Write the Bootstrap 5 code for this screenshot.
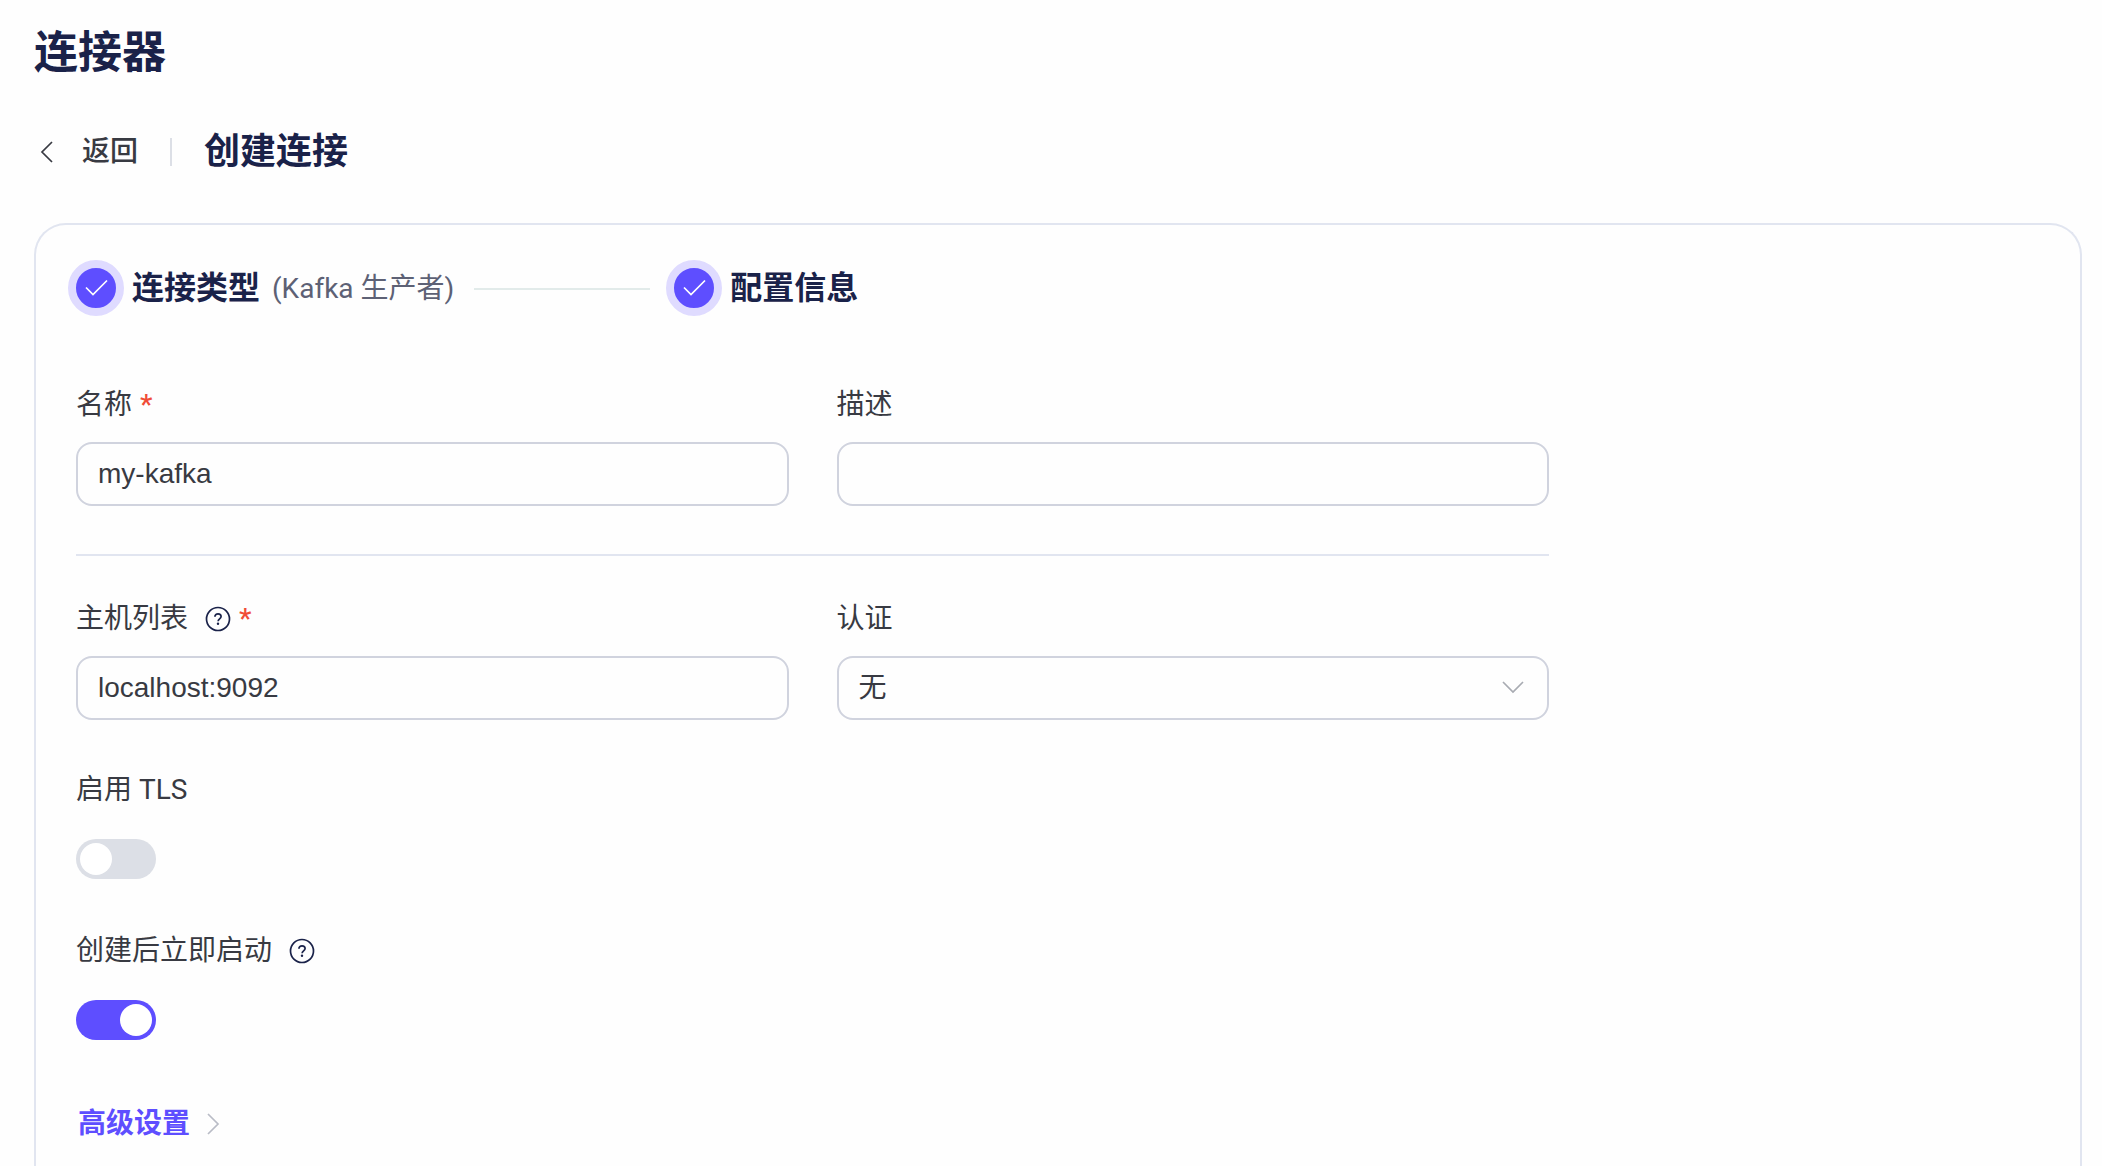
<!DOCTYPE html>
<html lang="zh-CN">
<head>
<meta charset="utf-8">
<meta name="viewport" content="width=device-width, initial-scale=1">
<title>连接器</title>
<link href="https://cdn.jsdelivr.net/npm/bootstrap@5.3.0/dist/css/bootstrap.min.css" rel="stylesheet">
<style>
  :root { --ink: #1a2249; --text: #383a42; --brand: #5e4eff; --line: #e1e5f0; --field: #d0d3de; }
  body { font-family: Roboto, "Noto Sans CJK SC", sans-serif; font-size: 28px; line-height: 44px; color: var(--text); background: #fefefe; }
  .page { padding: 21px 20px 0 34px; }
  .page-title { font-size: 44px; line-height: 64px; font-weight: 700; color: var(--ink); margin: 0 0 40px; }
  .back-link { color: var(--text); font-weight: 500; gap: 24px; padding-left: 2px; }
  .bar { width: 2px; height: 28px; background: #dcdfe6; margin: 0 32px; }
  .sub-title { font-size: 36px; line-height: 54px; font-weight: 700; color: var(--ink); margin: 0; }
  .panel { margin-top: 44px; border: 2px solid var(--line); border-bottom: 0; border-radius: 32px 32px 0 0; padding: 35px 40px 0; }
  .steps { margin: 0 -8px 67px; padding: 0; }
  .step-dot { width: 56px; height: 56px; border: 8px solid #dfdbff; background: var(--brand); }
  .step-name { font-size: 32px; font-weight: 700; color: var(--ink); margin-left: 8px; }
  .step-note { color: #5d6175; margin-left: 12px; padding-top: 2px; }
  .step-line { width: 176px; height: 2px; background: #e2ebea; margin: 2px 16px 0 20px; }
  .fields { --bs-gutter-x: 48px; }
  .field-label { height: 44px; margin-bottom: 15px; }
  .star { color: #f04c37; font-weight: 500; margin-left: 8px; }
  .help { margin-left: 17px; color: var(--ink); }
  .field-box { height: 64px; border: 2px solid var(--field); border-radius: 16px; padding: 0 20px; font-size: 28px; line-height: 44px; color: var(--text); background-color: #fefefe; }
  input.field-box { font-family: "Liberation Sans", sans-serif; }
  select.field-box { background-image: url("data:image/svg+xml,%3Csvg xmlns='http://www.w3.org/2000/svg' viewBox='0 0 24 24'%3E%3Cpath d='M2 6 12 16 22 6' fill='none' stroke='%23a8abb2' stroke-width='1.7'/%3E%3C/svg%3E"); background-size: 24px 24px; background-position: right 22px center; }
  .rule { border: 0; height: 2px; background: var(--line); opacity: 1; margin: 48px 0 41px; }
  .switch-row { height: 64px; }
  .toggle.form-check-input { width: 80px; height: 40px; margin: 0; border: 0; background-color: #dcdfe6; background-size: 40px 40px; background-image: url("data:image/svg+xml,%3Csvg xmlns='http://www.w3.org/2000/svg' viewBox='0 0 40 40'%3E%3Ccircle cx='20' cy='20' r='16' fill='%23fff'/%3E%3C/svg%3E") !important; }
  .toggle.form-check-input:checked { background-color: var(--brand); }
  .tls { margin-top: 48px; }
  .autostart { margin-top: 38px; }
  .advanced { color: var(--brand); font-weight: 700; margin-top: 50px; padding-left: 2px; gap: 16px; }
</style>
<script src="https://cdn.jsdelivr.net/npm/bootstrap@5.3.0/dist/js/bootstrap.bundle.min.js" defer></script>
</head>
<body>
<svg class="d-none" aria-hidden="true">
  <symbol id="i-help" viewBox="0 0 26 26">
    <circle cx="13" cy="13" r="11.5" fill="none" stroke="currentColor" stroke-width="1.7"/>
    <path d="M9.9 10.8c0-1.9 1.300-3 3.100-3s3.100 1.100 3.100 2.700c0 2.300-3 2.400-3 4.700" fill="none" stroke="currentColor" stroke-width="1.7"/>
    <circle cx="13" cy="17.8" r="1.2" fill="currentColor"/>
  </symbol>
  <symbol id="i-check" viewBox="0 0 40 40">
    <path d="M10 19.500 17 26.500 31 12.500" fill="none" stroke="#fff" stroke-width="1.7"/>
  </symbol>
</svg>
<main class="page min-vh-100 d-flex flex-column">
  <h1 class="page-title">连接器</h1>
  <div class="d-flex align-items-center">
    <a href="#" class="back-link d-flex align-items-center text-decoration-none">
      <svg width="22" height="24" viewBox="0 0 22 24" aria-hidden="true"><path d="M16 2 6 12 16 22" fill="none" stroke="currentColor" stroke-width="1.7"/></svg>
      <span>返回</span>
    </a>
    <div class="bar"></div>
    <h2 class="sub-title">创建连接</h2>
  </div>
  <section class="panel flex-grow-1">
    <ol class="steps list-unstyled d-flex align-items-center">
      <li class="d-flex align-items-center">
        <span class="step-dot rounded-circle d-flex"><svg width="40" height="40" aria-hidden="true"><use href="#i-check"/></svg></span>
        <span class="step-name">连接类型</span>
        <span class="step-note">(Kafka 生产者)</span>
        <span class="step-line"></span>
      </li>
      <li class="d-flex align-items-center">
        <span class="step-dot rounded-circle d-flex"><svg width="40" height="40" aria-hidden="true"><use href="#i-check"/></svg></span>
        <span class="step-name">配置信息</span>
      </li>
    </ol>
    <form class="w-75">
      <div class="row fields">
        <div class="col-6">
          <label for="name" class="field-label d-flex align-items-center">名称<span class="star">*</span></label>
          <input id="name" type="text" class="form-control field-box" value="my-kafka">
        </div>
        <div class="col-6">
          <label for="desc" class="field-label d-flex align-items-center">描述</label>
          <input id="desc" type="text" class="form-control field-box">
        </div>
      </div>
      <hr class="rule">
      <div class="row fields">
        <div class="col-6">
          <label for="hosts" class="field-label d-flex align-items-center">主机列表<svg class="help" width="26" height="26" aria-hidden="true"><use href="#i-help"/></svg><span class="star">*</span></label>
          <input id="hosts" type="text" class="form-control field-box" value="localhost:9092">
        </div>
        <div class="col-6">
          <label for="auth" class="field-label d-flex align-items-center">认证</label>
          <select id="auth" class="form-select field-box"><option>无</option></select>
        </div>
      </div>
      <div class="tls">
        <label for="tls" class="field-label d-flex align-items-center">启用 TLS</label>
        <div class="form-switch p-0 switch-row d-flex align-items-center"><input id="tls" type="checkbox" role="switch" class="form-check-input toggle"></div>
      </div>
      <div class="autostart">
        <label for="autostart" class="field-label d-flex align-items-center">创建后立即启动<svg class="help" width="26" height="26" aria-hidden="true"><use href="#i-help"/></svg></label>
        <div class="form-switch p-0 switch-row d-flex align-items-center"><input id="autostart" type="checkbox" role="switch" class="form-check-input toggle" checked></div>
      </div>
      <a href="#" class="advanced d-inline-flex align-items-center text-decoration-none">高级设置
        <svg width="16" height="24" viewBox="0 0 16 24" aria-hidden="true"><path d="M2 2 12 12 2 22" fill="none" stroke="#b9bcc6" stroke-width="1.7"/></svg>
      </a>
    </form>
  </section>
</main>
</body>
</html>
